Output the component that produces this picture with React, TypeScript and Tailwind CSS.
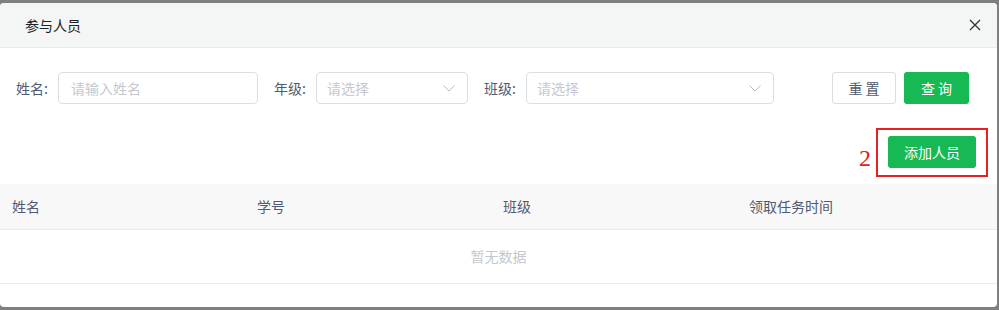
const font = { fontFamily: '"Noto Sans CJK SC", "Noto Sans", sans-serif' };

const Chevron = () => (
  <svg width="14" height="14" viewBox="0 0 14 14" fill="none" className="text-[#b8bcc4]">
    <polyline points="1.5,4.5 7,10 12.5,4.5" stroke="currentColor" strokeWidth="1" />
  </svg>
);

const CloseIcon = () => (
  <svg width="12" height="12" viewBox="0 0 12 12" fill="none">
    <path d="M1 1L11 11M11 1L1 11" stroke="#333" strokeWidth="1.3" />
  </svg>
);

const Field = ({ label, children }: { label: string; children: React.ReactNode }) => (
  <div className="flex items-center">
    <span className="text-[14px] text-[#515a6e] w-[42px] whitespace-nowrap">{label}</span>
    {children}
  </div>
);

const SelectBox = ({ width }: { width: string }) => (
  <div className={`${width} h-8 border border-[#dcdee2] rounded-[4px] flex items-center justify-between pl-[10px] pr-[11px]`}>
    <span className="text-[14px] text-[#c5c8ce]">请选择</span>
    <Chevron />
  </div>
);

const columns = ["姓名", "学号", "班级", "领取任务时间"];

export default function App() {
  return (
    <div className="w-[999px] h-[310px] bg-[#7f7f7f] pt-[3px] pb-[3px] overflow-hidden" style={font}>
      <div className="w-[997px] h-[304px] bg-white rounded-[4px] flex flex-col overflow-hidden">
        <div className="h-[45px] bg-[#f4f5f5] border-b border-[#e8eaec] flex items-center justify-between pl-[25px] pr-[16px] shrink-0">
          <span className="text-[14px] text-[#222]">参与人员</span>
          <CloseIcon />
        </div>

        <div className="flex items-center pl-4 pr-[28px] mt-6">
          <Field label="姓名:">
            <div className="w-[200px] h-8 border border-[#dcdee2] rounded-[4px] flex items-center pl-3">
              <span className="text-[14px] text-[#c5c8ce]">请输入姓名</span>
            </div>
          </Field>
          <div className="ml-4">
            <Field label="年级:">
              <SelectBox width="w-[152px]" />
            </Field>
          </div>
          <div className="ml-4">
            <Field label="班级:">
              <SelectBox width="w-[248px]" />
            </Field>
          </div>
          <div className="ml-auto flex items-center gap-2">
            <button className="w-[64px] h-8 border border-[#dcdee2] rounded-[3px] bg-white text-[14px] text-[#515a6e]">
              重 置
            </button>
            <button className="w-[65px] h-8 rounded-[3px] bg-[#17b955] text-[14px] text-white">
              查 询
            </button>
          </div>
        </div>

        <div className="flex items-center justify-end pr-[9px] mt-6">
          <span className="text-[24px] leading-none text-[#e02020] mr-[5px] mt-[10px]" style={{ fontFamily: '"Liberation Serif", serif' }}>
            2
          </span>
          <div className="border-2 border-[#e52222] px-[10px] pt-[6px] pb-[7px]">
            <button className="w-[88px] h-8 rounded-[3px] bg-[#17b955] text-[14px] text-white">添加人员</button>
          </div>
        </div>

        <div className="mt-[7px]">
          <div className="grid grid-cols-[245px_246px_246px_1fr] h-[46px] bg-[#f8f8f9] border-b border-[#e8eaec] pl-3 items-center">
            {columns.map((c) => (
              <span key={c} className="text-[14px] text-[#515a6e]">{c}</span>
            ))}
          </div>
          <div className="h-[54px] border-b border-[#e8eaec] flex items-center justify-center">
            <span className="text-[14px] text-[#c5c8ce]">暂无数据</span>
          </div>
        </div>
      </div>
    </div>
  );
}
